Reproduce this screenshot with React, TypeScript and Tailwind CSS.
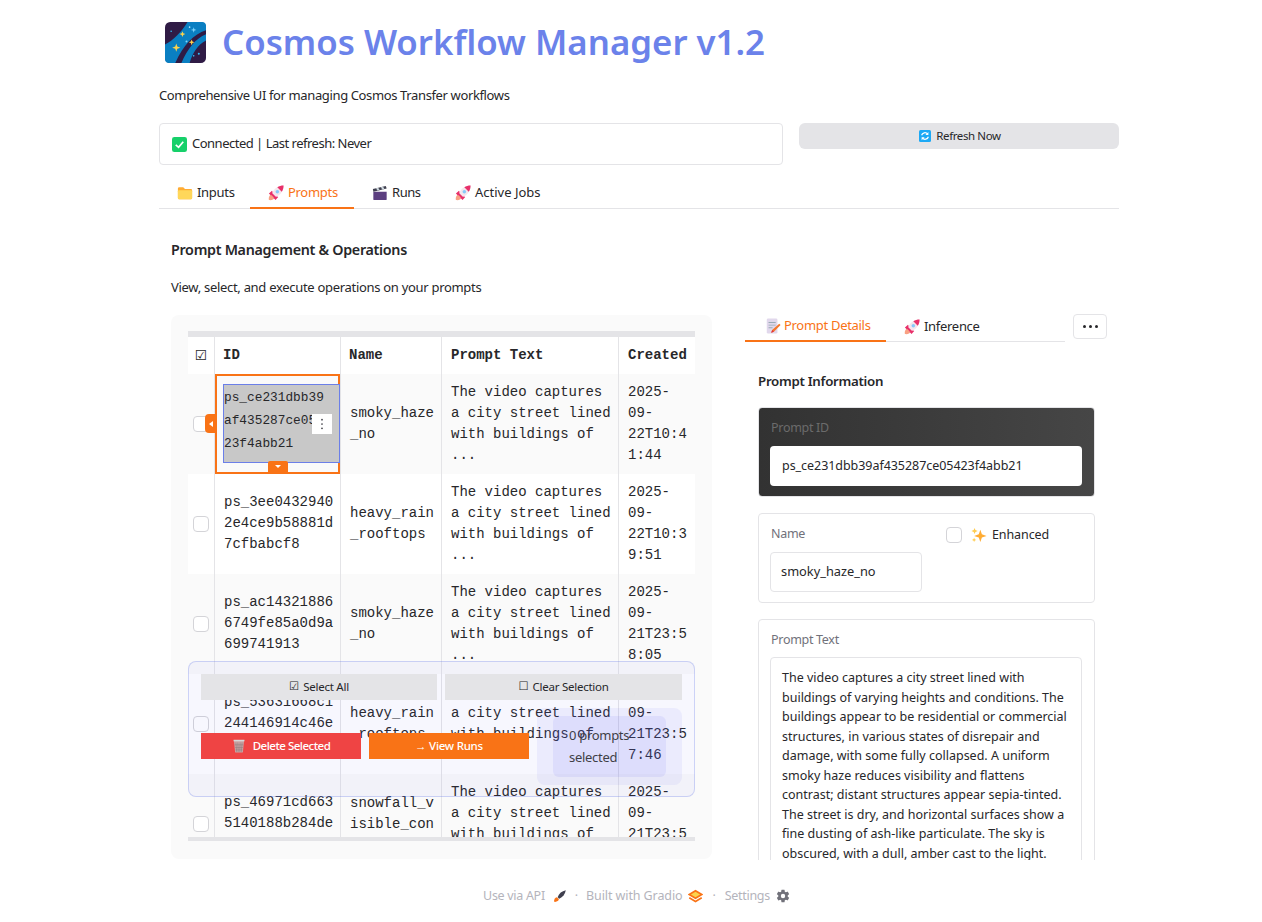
import { IoSettingsSharp } from "react-icons/io5";

const SANS = "font-['Noto_Sans',sans-serif]";
const MONO = "font-['Liberation_Mono',monospace]";

function Rocket({ className = "w-4 h-4" }: { className?: string }) {
  return (
    <svg viewBox="0 0 36 36" className={className}>
      <path d="M2 34c-1-6 1-12 6-12l6 6c0 5-6 7-12 6z" fill="#f9a184" />
      <path d="M9 13l-7 6 4 4 8-1zM23 27l-6 7-4-4 1-8z" fill="#e8306a" />
      <path d="M35 1C23 1 13 8 9 19l8 8c11-4 18-14 18-26z" fill="#f5e6ec" />
      <path d="M35 1c-5 0-10 1-14 4l10 10c3-4 4-9 4-14z" fill="#e8306a" />
      <path d="M9 18l9 9-4 2-8-8z" fill="#e8306a" />
      <circle cx="21" cy="15" r="4" fill="#88c9f9" />
    </svg>
  );
}

function Folder() {
  return (
    <svg viewBox="0 0 36 36" className="w-4 h-4">
      <path d="M2 8a3 3 0 013-3h9l4 4h13a3 3 0 013 3v17a3 3 0 01-3 3H5a3 3 0 01-3-3z" fill="#ffac33" />
      <path d="M2 14a2 2 0 012-2h28a2 2 0 012 2v15a3 3 0 01-3 3H5a3 3 0 01-3-3z" fill="#ffd75a" />
    </svg>
  );
}

function Clapper() {
  return (
    <svg viewBox="0 0 36 36" className="w-4 h-4">
      <path d="M3 15h30v17a2 2 0 01-2 2H5a2 2 0 01-2-2z" fill="#5c3f80" />
      <path d="M2 9l29-7 2 6-30 7z" fill="#3f3f4e" />
      <path d="M9 7.500l5-1.200 3 5-5 1.200zM20 5l5-1.200 3 5-5 1.200z" fill="#ccd6dd" />
    </svg>
  );
}

function Memo() {
  return (
    <svg viewBox="0 0 36 36" className="w-4 h-4">
      <path d="M4 4a3 3 0 013-3h18a3 3 0 013 3v28a3 3 0 01-3 3H7a3 3 0 01-3-3z" fill="#e1d8ec" />
      <path d="M8 9h16v2H8zM8 15h16v2H8zM8 21h9v2H8z" fill="#99aab5" />
      <path d="M32 13l3 3-15 15-6 2 2-6z" fill="#f4762a" />
      <path d="M14 33l2-6 4 4z" fill="#dd2e44" />
    </svg>
  );
}

function Sparkles() {
  return (
    <svg viewBox="0 0 36 36" className="w-4 h-4">
      <path d="M21 6l3.500 10.500L35 20l-10.500 3.500L21 34l-3.500-10.500L7 20l10.500-3.500z" fill="#ffac33" />
      <path d="M8 2l2 5 5 2-5 2-2 5-2-5-5-2 5-2z" fill="#ffcc4d" />
      <path d="M7 24l1.500 3.500L12 29l-3.500 1.500L7 34l-1.500-3.500L2 29l3.500-1.500z" fill="#ffcc4d" />
    </svg>
  );
}

function Trash() {
  return (
    <svg viewBox="0 0 36 36" className="w-[14px] h-[14px]">
      <path d="M5 5h26l-3 29a2 2 0 01-2 1H10a2 2 0 01-2-1z" fill="#c9a3a3" />
      <path d="M4 2h28v4H4z" fill="#d8d8d8" />
      <path d="M10 9l2 24M15 9l1 24M21 9l-1 24M26 9l-2 24M7 15h22M8 22h20M9 28h18" stroke="#8f8080" strokeWidth="1.500" fill="none" />
    </svg>
  );
}

function GalaxyLogo() {
  return (
    <svg viewBox="0 0 40 40" className="w-[41px] h-[41px]">
      <rect width="40" height="40" rx="5" fill="#2f1b45" />
      <path d="M0 22C8 18 16 10 22 0H36a4 4 0 014 4V8C28 12 18 22 10 40H4a4 4 0 01-4-4z" fill="#0a7fc2" />
      <path d="M40 12C30 16 22 26 16 40H24C27 30 32 22 40 18z" fill="#0a7fc2" />
      <path d="M11 21l1 3 3 1-3 1-1 3-1-3-3-1 3-1zM17 9l.8 2 2 .8-2 .8-.8 2-.8-2-2-.8 2-.8zM26 17l.8 2 2 .8-2 .8-.8 2-.8-2-2-.8 2-.8z" fill="#fcd34d" />
      <path d="M28 5l.7 2 2 .7-2 .7-.7 2-.7-2-2-.7 2-.7z" fill="#7dd3fc" />
      <circle cx="21" cy="19" r="1" fill="#7dd3fc" />
      <circle cx="24" cy="5" r="0.8" fill="#bae6fd" />
      <circle cx="33" cy="31" r="1" fill="#38bdf8" />
      <circle cx="6" cy="9" r="0.8" fill="#38bdf8" />
      <circle cx="28" cy="33" r="0.8" fill="#38bdf8" />
    </svg>
  );
}

function ApiRocket() {
  return (
    <svg viewBox="0 0 36 36" className="w-[14px] h-[14px]">
      <path d="M3 33c-1-6 2-12 7-12l5 5c0 5-6 8-12 7z" fill="#f97316" />
      <path d="M12 21C15 11 23 5 33 3c-2 10-8 18-17 22z" fill="#3f3f4e" />
    </svg>
  );
}

function GradioLogo() {
  return (
    <svg viewBox="0 0 36 36" className="w-[15px] h-[15px]" fill="none" stroke="#f97316" strokeWidth="4">
      <path d="M18 4L33 13 18 22 3 13z" fill="#fcd34d" />
      <path d="M3 21l15 9 15-9" />
    </svg>
  );
}

function Checkbox({ className = "" }: { className?: string }) {
  return <div className={`w-4 h-4 rounded border border-[#d4d4d8] bg-white shrink-0 ${className}`} />;
}

interface Row {
  id: string[];
  name: string[];
  created: string[];
  even: boolean;
}

const ROWS: Row[] = [
  { id: ["ps_ce231dbb39", "af435287ce05", "23f4abb21"], name: ["smoky_haze", "_no"], created: ["2025-", "09-", "22T10:4", "1:44"], even: false },
  { id: ["ps_3ee0432940", "2e4ce9b58881d", "7cfbabcf8"], name: ["heavy_rain", "_rooftops"], created: ["2025-", "09-", "22T10:3", "9:51"], even: true },
  { id: ["ps_ac14321886", "6749fe85a0d9a", "699741913"], name: ["smoky_haze", "_no"], created: ["2025-", "09-", "21T23:5", "8:05"], even: false },
  { id: ["ps_53631668c1", "244146914c46e", "bd8e0a771"], name: ["heavy_rain", "_rooftops"], created: ["2025-", "09-", "21T23:5", "7:46"], even: true },
  { id: ["ps_46971cd663", "5140188b284de", "a02b3fd16"], name: ["snowfall_v", "isible_con", "ditions"], created: ["2025-", "09-", "21T23:5", "5:12"], even: false },
];

const PROMPT_LINES = ["The video captures", "a city street lined", "with buildings of", "..."];

function Lines({ lines }: { lines: string[] }) {
  return (
    <>
      {lines.map((line) => (
        <div key={line} className="whitespace-pre">
          {line}
        </div>
      ))}
    </>
  );
}

function TableRow({ row, selected }: { row: Row; selected?: boolean }) {
  return (
    <div className={`grid grid-cols-[27px_126px_101px_177px_76px] h-[100px] ${row.even ? "bg-white" : "bg-[#fafafa]"}`}>
      <div className="flex items-center justify-center border-r border-[#e4e4e7]">
        <Checkbox />
      </div>
      {selected ? (
        <div className="relative border-r border-[#e4e4e7]">
          <div className="absolute inset-0 border-2 border-[#f97316]" />
          <div className="absolute left-[8px] right-0 top-[10px] h-[79px] bg-[#c8c8c8] border border-[#6b7fe8] pt-[1px] text-[12.8px] leading-[23px] overflow-hidden">
            <Lines lines={row.id} />
          </div>
          <div className="absolute left-[97px] top-[40px] w-[20px] h-[20px] bg-white flex items-center justify-center text-[#3f3f46]">
            <svg viewBox="0 0 4 14" className="w-[4px] h-[12px]" fill="currentColor">
              <circle cx="2" cy="2" r="1" />
              <circle cx="2" cy="7" r="1" />
              <circle cx="2" cy="12" r="1" />
            </svg>
          </div>
          <div className="absolute -left-[10px] top-[40px] w-[11px] h-[19px] bg-[#f97316] rounded-l-[4px] flex items-center justify-center">
            <div className="w-0 h-0 border-y-[3px] border-y-transparent border-r-[4px] border-r-white" />
          </div>
          <div className="absolute left-[53px] top-[87px] w-[20px] h-[11px] bg-[#f97316] rounded-t-[2px] flex items-center justify-center">
            <div className="w-0 h-0 border-x-[3px] border-x-transparent border-t-[3px] border-t-white" />
          </div>
        </div>
      ) : (
        <div className="flex items-center pl-[9px] pb-[2px] border-r border-[#e4e4e7]">
          <div>
            <Lines lines={row.id} />
          </div>
        </div>
      )}
      <div className="flex items-center pl-[9px] border-r border-[#e4e4e7]">
        <div>
          <Lines lines={row.name} />
        </div>
      </div>
      <div className="flex items-center pl-[9px] border-r border-[#e4e4e7]">
        <div>
          <Lines lines={PROMPT_LINES} />
        </div>
      </div>
      <div className="flex items-center pl-[9px]">
        <div>
          <Lines lines={row.created} />
        </div>
      </div>
    </div>
  );
}

function PromptTable() {
  return (
    <div className={`relative w-[507px] ${MONO} text-[14px] leading-[21px] tracking-normal text-[#27272a]`}>
      <div className="h-[6px] bg-[#e4e4e7]" />
      <div className="h-[500px] overflow-hidden bg-white">
        <div className="grid grid-cols-[27px_126px_101px_177px_76px] h-[37px] font-bold bg-white">
          <div className="flex items-center justify-center border-r border-[#e4e4e7] font-['DejaVu_Sans',sans-serif] text-[14px] font-bold">☑</div>
          <div className="flex items-center pl-[8px] border-r border-[#e4e4e7]">ID</div>
          <div className="flex items-center pl-[8px] border-r border-[#e4e4e7]">Name</div>
          <div className="flex items-center pl-[9px] border-r border-[#e4e4e7]">Prompt Text</div>
          <div className="flex items-center pl-[9px]">Created</div>
        </div>
        {ROWS.map((row, i) => (
          <TableRow key={row.id[0]} row={row} selected={i === 0} />
        ))}
      </div>
      <div className="h-[4px] bg-[#e4e4e7]" />
    </div>
  );
}

function SelectionToolbar() {
  const base = `${SANS} flex items-center justify-center gap-1 h-[26px] text-[11.5px] tracking-[-0.25px]`;
  return (
    <div className="absolute left-[17px] top-[346px] w-[507px] h-[136px] rounded-lg border border-[#6b7fe8]/30 bg-[#6366f1]/[0.05] pt-[12px] pl-[12px] pr-[12px]">
      <div className="flex gap-2">
        <button className={`${base} w-[236px] bg-[#e4e4e7] text-[#27272a]`}>
          <span className="font-['DejaVu_Sans',sans-serif]">☑</span> Select All
        </button>
        <button className={`${base} w-[237px] bg-[#e4e4e7] text-[#27272a]`}>
          <span className="font-['DejaVu_Sans',sans-serif]">☐</span> Clear Selection
        </button>
      </div>
      <div className="flex gap-2 mt-[8px]">
        <div className="flex gap-2 mt-[25px] self-start">
          <button className={`${base} w-[160px] bg-[#ef4444] text-white font-medium`}>
            <Trash />
            <span className="ml-[3px] tracking-[-0.5px]">Delete Selected</span>
          </button>
          <button className={`${base} w-[160px] bg-[#f97316] text-white font-medium`}>→ View Runs</button>
        </div>
        <div className="w-[145px] h-[77px] rounded-lg bg-[#6366f1]/[0.08] p-2 px-4">
          <div className={`h-[61px] rounded-md bg-[#6366f1]/[0.1] flex items-center pl-4 pb-[2px] ${SANS} text-[13px] leading-[22px] text-[#3f3f46]`}>
            <div className="w-[70px]">0 prompts selected</div>
          </div>
        </div>
      </div>
    </div>
  );
}

function Card({ className = "", children }: { className?: string; children: React.ReactNode }) {
  return <div className={`border border-[#e4e4e7] rounded-[4px] pl-[11px] pr-[12px] ${className}`}>{children}</div>;
}

function PromptDetails() {
  return (
    <div className="w-[362px] ml-[33px] relative h-[545px] -mt-px">
      <div className="flex items-start">
        <div className="flex w-[320px] h-[28px] border-b border-[#e4e4e7] text-[13px]">
          <div className="w-[141px] h-[28px] border-b-2 border-[#f97316] flex items-center gap-[3px] pl-5 pb-[2px] text-[#f97316]">
            <Memo />
            Prompt Details
          </div>
          <div className="flex items-center gap-[4px] pl-[18px] h-[25px] text-[#27272a]">
            <Rocket />
            Inference
          </div>
        </div>
        <button className="ml-2 w-[34px] h-[25px] border border-[#e4e4e7] rounded-[4px] flex items-center justify-center gap-[3px] pb-px">
          <span className="w-[3px] h-[3px] rounded-full bg-[#27272a]" />
          <span className="w-[3px] h-[3px] rounded-full bg-[#27272a]" />
          <span className="w-[3px] h-[3px] rounded-full bg-[#27272a]" />
        </button>
      </div>
      <div className="ml-[13px] w-[337px] h-[518px] overflow-hidden">
        <div className="mt-[29px] text-[13.3px] leading-[20px] font-semibold text-[#27272a]">Prompt Information</div>
        <div className="mt-[16px] h-[90px] rounded-[4px] border border-[#e4e4e7] bg-gradient-to-r from-[#323232] to-[#464646] pl-[11px] pr-[12px] pt-[10px]">
          <div className="pl-px text-[12.5px] leading-[20px] text-[#6b6b6b]">Prompt ID</div>
          <div className="mt-[8px] h-[40px] rounded-[4px] bg-white px-3 flex items-center text-[12.5px] tracking-[-0.05px] text-[#27272a]">ps_ce231dbb39af435287ce05423f4abb21</div>
        </div>
        <Card className="mt-[16px] h-[90px] flex gap-6 pt-[10px]">
          <div className="w-[152px]">
            <div className="pl-px text-[12.5px] leading-[20px] text-[#71717a]">Name</div>
            <div className="mt-[8px] h-[40px] rounded-[4px] border border-[#e4e4e7] px-[10px] flex items-center text-[12.8px] tracking-normal text-[#27272a]">smoky_haze_no</div>
          </div>
          <div className="flex items-center h-[20px] mt-[1px] text-[12.5px] tracking-[-0.1px] text-[#27272a]">
            <Checkbox />
            <span className="ml-[9px] mr-[5px]">
              <Sparkles />
            </span>
            Enhanced
          </div>
        </Card>
        <Card className="mt-[16px] h-[300px] pt-[10px]">
          <div className="pl-px text-[12.5px] leading-[20px] text-[#71717a]">Prompt Text</div>
          <div className="mt-[7px] rounded-[4px] border border-[#e4e4e7] px-[11px] pt-[10px] h-[260px] text-[12.5px] leading-[19.500px] tracking-normal text-[#27272a]">
            The video captures a city street lined with buildings of varying heights and conditions. The buildings appear to be residential or commercial structures, in various states of disrepair and damage, with some fully collapsed. A uniform smoky haze reduces visibility and flattens contrast; distant structures appear sepia-tinted. The street is dry, and horizontal surfaces show a fine dusting of ash-like particulate. The sky is obscured, with a dull, amber cast to the light.
          </div>
        </Card>
      </div>
    </div>
  );
}

export default function App() {
  return (
    <div className={`relative h-[922px] overflow-hidden bg-white ${SANS} tracking-[-0.3px] text-[#27272a]`}>
      <main className="ml-[159px] w-[960px]">
        <header className="flex items-center pl-[6px] pt-[21px] h-[63px]">
          <GalaxyLogo />
          <h1 className="ml-[16px] text-[34.8px] leading-[40px] font-semibold tracking-normal text-[#6b82ea]">Cosmos Workflow Manager v1.2</h1>
        </header>
        <p className="mt-[22px] text-[13px] leading-[20px] tracking-[-0.37px]">Comprehensive UI for managing Cosmos Transfer workflows</p>
        <div className="mt-[18px] flex gap-4 items-start">
          <div className="w-[624px] h-[42px] rounded-[4px] border border-[#e4e4e7] flex items-center pl-3 gap-[5px] text-[13px] tracking-[-0.5px]">
            <svg viewBox="0 0 16 16" className="w-[15px] h-[15px]">
              <rect width="16" height="16" rx="2.500" fill="#16d06a" />
              <path d="M4 8.500l3 2.500 5-6" stroke="#fff" strokeWidth="1.800" fill="none" />
            </svg>
            Connected | Last refresh: Never
          </div>
          <button className="w-[320px] h-[26px] rounded-md bg-[#e4e4e7] flex items-center justify-center gap-[5px] pl-[2px] text-[11.5px] tracking-[-0.4px]">
            <svg viewBox="0 0 16 16" className="w-[12px] h-[12px]">
              <rect width="16" height="16" rx="2" fill="#1da9f5" />
              <path d="M3.500 7a4.500 4.500 0 018-1.500M12.500 9a4.500 4.500 0 01-8 1.500" stroke="#fff" strokeWidth="1.600" fill="none" />
              <path d="M12.500 2.500v4h-4zM3.500 13.500v-4h4z" fill="#fff" />
            </svg>
            Refresh Now
          </button>
        </div>
        <nav className="mt-[12px] flex h-[32px] border-b border-[#e4e4e7] text-[13px]">
          <div className="w-[91px] pl-[18px] flex items-center gap-[4px]">
            <Folder />
            Inputs
          </div>
          <div className="w-[104px] pl-[18px] pt-[2px] flex items-center gap-[4px] h-[32px] border-b-2 border-[#f97316] text-[#f97316]">
            <Rocket />
            Prompts
          </div>
          <div className="w-[83px] pl-[18px] flex items-center gap-[4px] tracking-[-0.45px]">
            <Clapper />
            Runs
          </div>
          <div className="pl-[18px] flex items-center gap-[4px] tracking-normal">
            <Rocket />
            Active Jobs
          </div>
        </nav>
        <section className="pl-3">
          <h2 className="mt-[31px] text-[14.3px] leading-[20px] font-semibold">Prompt Management &amp; Operations</h2>
          <p className="mt-[17px] text-[13px] leading-[20px]">View, select, and execute operations on your prompts</p>
          <div className="mt-[18px] flex items-start">
            <div className="relative w-[541px] h-[544px] rounded-lg bg-[#fafafa] pl-[17px] pt-[16px]">
              <PromptTable />
              <SelectionToolbar />
            </div>
            <PromptDetails />
          </div>
        </section>
      </main>
      <footer className="absolute left-0 right-0 top-[886px] pl-[11px] flex items-center justify-center gap-[8px] text-[12.5px] leading-[20px] tracking-[-0.1px] text-[#b4b4bc]">
        <span className="tracking-[-0.3px]">Use via API</span>
        <ApiRocket />
        <span>·</span>
        <span>Built with Gradio</span>
        <span className="-ml-[3px]">
          <GradioLogo />
        </span>
        <span className="ml-[2px]">·</span>
        <span className="ml-[1px] tracking-[-0.3px]">Settings</span>
        <IoSettingsSharp className="-ml-[2px] w-[14px] h-[14px] text-[#71717a]" />
      </footer>
    </div>
  );
}
